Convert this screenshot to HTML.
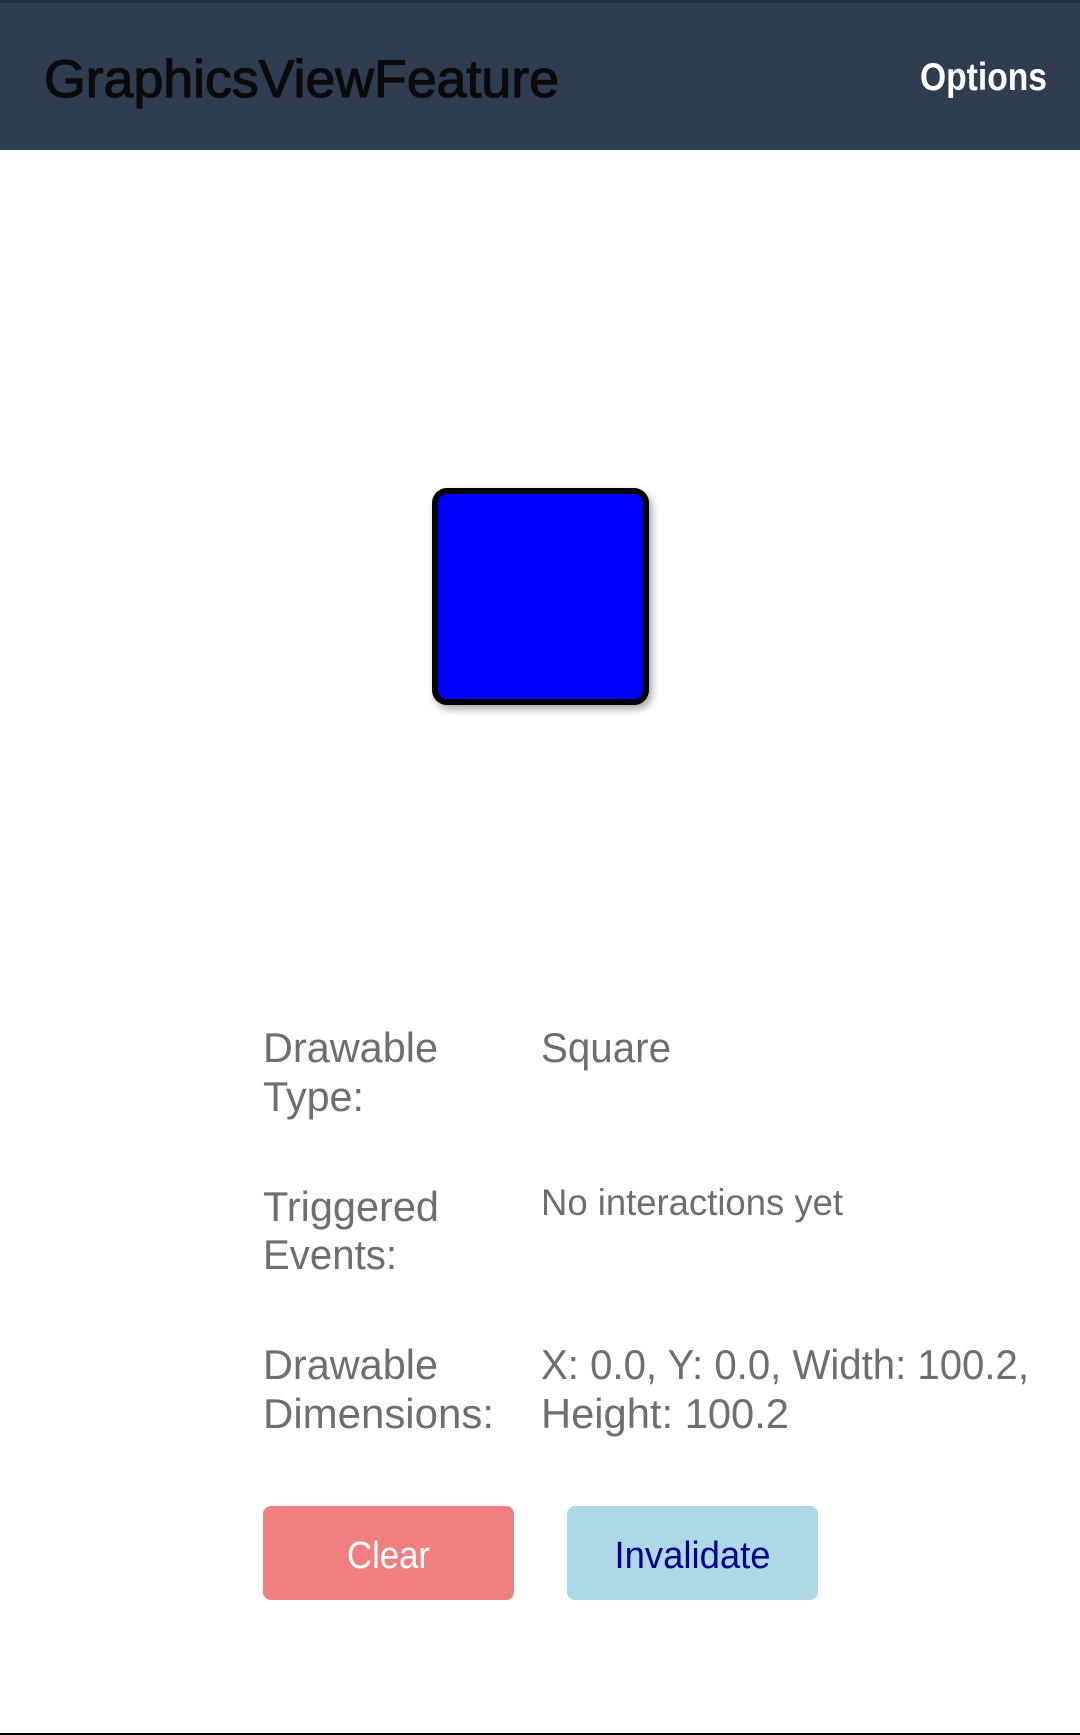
<!DOCTYPE html>
<html><head><meta charset="utf-8"><style>
html,body{margin:0;padding:0;width:1080px;height:1735px;overflow:hidden;background:#fff}
svg{display:block}
text{font-family:"Liberation Sans",sans-serif}
</style></head><body>
<svg width="1080" height="1735" viewBox="0 0 1080 1735" xmlns="http://www.w3.org/2000/svg">
<defs>
<filter id="sh" x="-20%" y="-20%" width="140%" height="140%"><feDropShadow dx="3" dy="4" stdDeviation="4" flood-color="#000" flood-opacity="0.35"/></filter>
</defs>
<rect x="0" y="0" width="1080" height="150" fill="#2e3e50"/>
<rect x="0" y="0" width="1080" height="3" fill="#1f3147"/>
<text x="44" y="97" font-size="53" fill="#0a0a0a" stroke="#0a0a0a" stroke-width="1.2" textLength="515" lengthAdjust="spacingAndGlyphs">GraphicsViewFeature</text>
<text x="920" y="90" font-size="39" fill="#fff" font-weight="bold" textLength="127" lengthAdjust="spacingAndGlyphs">Options</text>

<rect x="435" y="491" width="211" height="211" rx="12" fill="#0000ff" stroke="#000" stroke-width="6" filter="url(#sh)"/>

<g fill="#6e6e6e" font-size="42">
<text x="263" y="1062" textLength="175" lengthAdjust="spacingAndGlyphs">Drawable</text>
<text x="263" y="1111" textLength="101" lengthAdjust="spacingAndGlyphs">Type:</text>
<text x="541" y="1062" textLength="130" lengthAdjust="spacingAndGlyphs">Square</text>
<text x="263" y="1221" textLength="176" lengthAdjust="spacingAndGlyphs">Triggered</text>
<text x="263" y="1269" textLength="134" lengthAdjust="spacingAndGlyphs">Events:</text>
<text x="541" y="1215" font-size="37" textLength="302" lengthAdjust="spacingAndGlyphs">No interactions yet</text>
<text x="263" y="1379" textLength="175" lengthAdjust="spacingAndGlyphs">Drawable</text>
<text x="263" y="1428" textLength="231" lengthAdjust="spacingAndGlyphs">Dimensions:</text>
<text x="541" y="1379" textLength="488" lengthAdjust="spacingAndGlyphs">X: 0.0, Y: 0.0, Width: 100.2,</text>
<text x="541" y="1428" textLength="248" lengthAdjust="spacingAndGlyphs">Height: 100.2</text>
</g>

<rect x="263" y="1506" width="251" height="94" rx="8" fill="#f08080"/>
<text x="388.5" y="1568" font-size="38" fill="#fff" text-anchor="middle" textLength="83" lengthAdjust="spacingAndGlyphs">Clear</text>
<rect x="567" y="1506" width="251" height="94" rx="8" fill="#add8e6"/>
<text x="692.5" y="1568" font-size="38" fill="#00008b" text-anchor="middle" textLength="156" lengthAdjust="spacingAndGlyphs">Invalidate</text>

<rect x="0" y="1733" width="1080" height="2" fill="#000"/>
</svg>
</body></html>
